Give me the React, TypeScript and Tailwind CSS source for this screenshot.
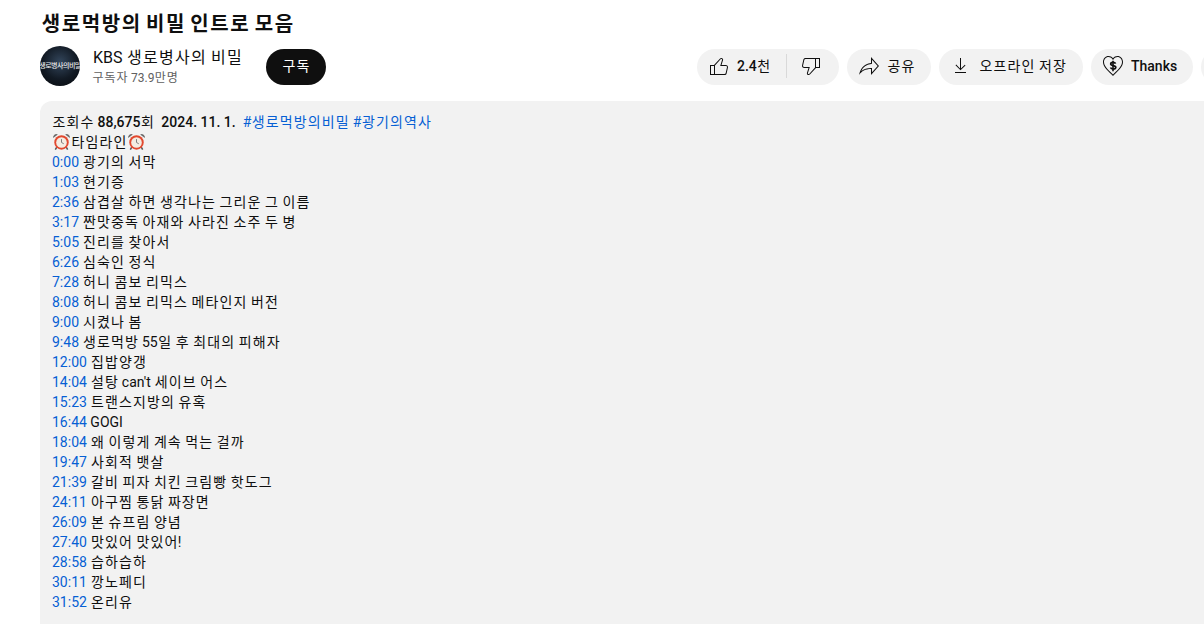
const FONT = "font-['Roboto','Noto_Sans_CJK_KR',sans-serif]";

const rows: [string, string][] = [
  ["0:00", "광기의 서막"],
  ["1:03", "현기증"],
  ["2:36", "삼겹살 하면 생각나는 그리운 그 이름"],
  ["3:17", "짠맛중독 아재와 사라진 소주 두 병"],
  ["5:05", "진리를 찾아서"],
  ["6:26", "심숙인 정식"],
  ["7:28", "허니 콤보 리믹스"],
  ["8:08", "허니 콤보 리믹스 메타인지 버전"],
  ["9:00", "시켰나 봄"],
  ["9:48", "생로먹방 55일 후 최대의 피해자"],
  ["12:00", "집밥양갱"],
  ["14:04", "설탕 can't 세이브 어스"],
  ["15:23", "트랜스지방의 유혹"],
  ["16:44", "GOGI"],
  ["18:04", "왜 이렇게 계속 먹는 걸까"],
  ["19:47", "사회적 뱃살"],
  ["21:39", "갈비 피자 치킨 크림빵 핫도그"],
  ["24:11", "아구찜 통닭 짜장면"],
  ["26:09", "본 슈프림 양념"],
  ["27:40", "맛있어 맛있어!"],
  ["28:58", "습하습하"],
  ["30:11", "깡노페디"],
  ["31:52", "온리유"],
];

// Hangul in the picture has a full 1em advance; the installed CJK face is 0.92em.
function K({ children, strong, bold }: { children: string; strong?: boolean; bold?: boolean }) {
  const parts = children.split(/([\uac00-\ud7a3]+)/);
  return (
    <>
      {parts.map((p, i) =>
        i % 2 === 1 ? (
          <span key={i} className={`ml-[0.04em] mr-[-0.04em] tracking-[0.08em] ${bold ? "font-bold" : "font-normal"}`}>{p}</span>
        ) : (
          <span key={i} className={strong ? "font-medium" : undefined}>{p}</span>
        ),
      )}
    </>
  );
}

function Clock() {
  return (
    <svg viewBox="0 0 20 20" className="inline-block w-[19px] h-[19px] align-[-4px]">
      <line x1="5" y1="16" x2="3.5" y2="18.5" stroke="#555" strokeWidth="1.6" />
      <line x1="15" y1="16" x2="16.5" y2="18.5" stroke="#555" strokeWidth="1.6" />
      <path d="M1.2 6.2a3.4 3.4 0 0 1 5-3.6z" fill="#6b6b6b" />
      <path d="M18.8 6.2a3.4 3.4 0 0 0-5-3.6z" fill="#6b6b6b" />
      <circle cx="10" cy="11" r="7.6" fill="#e2492f" />
      <circle cx="10" cy="11" r="5.6" fill="#f4ece2" />
      <path d="M10 7.5V11l2.4 1.4" fill="none" stroke="#777" strokeWidth="1" />
    </svg>
  );
}

function Icon({ d }: { d: string }) {
  return (
    <svg viewBox="0 0 24 24" className="w-6 h-6 shrink-0 fill-[#0f0f0f]">
      <path d={d} />
    </svg>
  );
}

const LIKE = "M18.77,11h-4.23l1.52-4.94C16.38,5.03,15.54,4,14.38,4c-0.58,0-1.14,0.24-1.52,0.65L7,11H3v10h4h1h9.43 c1.06,0,1.98-0.67,2.19-1.61l1.34-6C21.23,12.15,20.18,11,18.77,11z M7,20H4v-8h3V20z M19.98,13.17l-1.34,6 C18.54,19.65,18.03,20,17.43,20H8v-8.61l5.6-6.06C13.79,5.12,14.08,5,14.38,5c0.26,0,0.5,0.11,0.63,0.3 c0.07,0.1,0.15,0.26,0.09,0.47l-1.52,4.94L13.18,12h1.35h4.23c0.41,0,0.8,0.17,1.03,0.46C19.92,12.61,20.05,12.86,19.98,13.17z";
const DISLIKE = "M17,4h-1H6.57C5.5,4,4.59,4.67,4.38,5.61l-1.34,6C2.77,12.85,3.82,14,5.23,14h4.23l-1.52,4.94C7.62,19.97,8.46,21,9.62,21 c0.58,0,1.14-0.24,1.52-0.65L17,14h4V4H17z M10.4,19.67C10.21,19.88,9.92,20,9.62,20c-0.26,0-0.5-0.11-0.63-0.3 c-0.07-0.1-0.15-0.26-0.09-0.47l1.52-4.94l0.4-1.29H9.46H5.23c-0.41,0-0.8-0.17-1.03-0.46c-0.12-0.15-0.25-0.4-0.18-0.72l1.34-6 C5.46,5.35,5.97,5,6.57,5H16v8.61L10.4,19.67z M20,13h-3V5h3V13z";
const SHARE = "M15,5.63L20.66,12L15,18.37V14h-1c-3.96,0-7.14,1-9.75,3.09c1.84-4.07,5.11-6.4,9.89-7.1L15,9.86V5.63 M14,3v6 C6.22,10.13,3.11,15.33,2,21c2.78-3.97,6.44-6,12-6v6l8-9L14,3L14,3z";
const DOWNLOAD = "M17 18v1H6v-1h11zm-.5-6.6-.7-.7-3.8 3.7V4h-1v10.4l-3.8-3.8-.7.7 5 5 5-4.9z";
const HEART = "M16.5 3C19.02 3 21 5.19 21 7.99c0 3.7-3.28 6.94-8.25 11.86L12 20.59l-.74-.73-.04-.04C6.27 14.92 3 11.69 3 7.99 3 5.19 4.98 3 7.5 3c1.4 0 2.79.71 3.71 1.89L12 5.9l.79-1.01C13.71 3.71 15.1 3 16.5 3m0-1c-1.74 0-3.41.88-4.5 2.28C10.91 2.88 9.24 2 7.5 2 4.42 2 2 4.64 2 7.99c0 4.12 3.4 7.48 8.55 12.58L12 22l1.45-1.44C18.6 15.47 22 12.11 22 7.99 22 4.64 19.58 2 16.5 2z";

function Pill({ icon, label, width }: { icon: string; label: string; width: string }) {
  return (
    <div className={`flex items-center h-9 rounded-full bg-[#f2f2f2] pl-[10px] pb-[2px] ${width} shrink-0`}>
      <Icon d={icon} />
      <span className="ml-[6px] text-sm text-[#0f0f0f] whitespace-nowrap"><K>{label}</K></span>
    </div>
  );
}

export default function App() {
  return (
    <div className={`w-[1204px] h-[624px] overflow-hidden bg-white pl-10 text-[#0f0f0f] ${FONT}`}>
      <h1 className="h-[46px] pt-[10px] pl-px text-xl leading-7 font-bold whitespace-nowrap [word-spacing:-0.7px]"><K bold>생로먹방의 비밀 인트로 모음</K></h1>
      <div className="flex w-[1400px] items-start h-10 shrink-0">
        <div className="relative w-10 h-10 rounded-full overflow-hidden bg-[radial-gradient(circle_at_50%_40%,#33465c_0%,#121a24_55%,#05070a_100%)] flex items-center justify-center shrink-0">
          <span className="text-[7px] leading-none font-medium text-[#e8e8e8] whitespace-nowrap tracking-[-0.5px]">생로병사의비밀</span>
        </div>
        <div className="ml-3 pt-[1px] w-[162px] shrink-0">
          <div className="text-base leading-[22px] whitespace-nowrap pl-px"><K>KBS 생로병사의 비밀</K></div>
          <div className="text-xs leading-[18px] text-[#606060] whitespace-nowrap"><K>구독자 73.9만명</K></div>
        </div>
        <div className="ml-[12px] mt-[3px] pb-[2px] flex items-center justify-center w-[60px] h-9 rounded-full bg-[#0f0f0f] text-white text-sm shrink-0"><K>구독</K></div>
        <div className="ml-[371px] mt-[3px] flex items-center gap-2 shrink-0">
          <div className="flex items-center h-9 w-[142px] rounded-full bg-[#f2f2f2] pl-[10px] pb-[2px] shrink-0">
            <Icon d={LIKE} />
            <span className="ml-[6px] w-[34px] text-sm whitespace-nowrap"><K strong>2.4천</K></span>
            <div className="ml-[15px] w-px h-6 bg-[#d9d9d9]" />
            <div className="ml-[12px]"><Icon d={DISLIKE} /></div>
          </div>
          <Pill icon={SHARE} label="공유" width="w-[84px]" />
          <Pill icon={DOWNLOAD} label="오프라인 저장" width="w-[144px]" />
          <div className="flex items-center h-9 w-[102px] rounded-full bg-[#f2f2f2] pl-[10px] pb-[2px] shrink-0">
            <svg viewBox="0 0 24 24" className="w-6 h-6 shrink-0 fill-[#0f0f0f]">
              <path d={HEART} />
              <path d="M14.6 9.6c-.4-.9-1.3-1.3-2.5-1.3-1.4 0-2.4.6-2.4 1.6 0 2.3 5.1 1.1 5.1 3.4 0 1-1 1.7-2.6 1.7-1.3 0-2.3-.5-2.7-1.5" fill="none" stroke="#0f0f0f" strokeWidth="1.7" />
              <path d="M11.2 6.8h1.6v10.4h-1.6z" />
            </svg>
            <span className="ml-[6px] text-sm font-medium">Thanks</span>
          </div>
          <div className="w-9 h-9 rounded-full bg-[#f2f2f2] shrink-0" />
        </div>
      </div>
      <div className="mt-[15px] w-[1300px] h-[600px] rounded-xl bg-[#f2f2f2] px-3 pt-[11px] text-sm leading-5">
        <div className="whitespace-nowrap">
          <K strong>조회수 88,675회</K>&nbsp; <span className="font-medium">2024. 11. 1.</span>&nbsp; <span className="text-[#065fd4]"><K>#생로먹방의비밀 #광기의역사</K></span>
        </div>
        <div className="whitespace-nowrap"><Clock /><K>타임라인</K><Clock /></div>
        {rows.map(([t, s]) => (
          <div key={t} className="whitespace-nowrap">
            <span className="text-[#065fd4]">{t}</span> <K>{s}</K>
          </div>
        ))}
      </div>
    </div>
  );
}
